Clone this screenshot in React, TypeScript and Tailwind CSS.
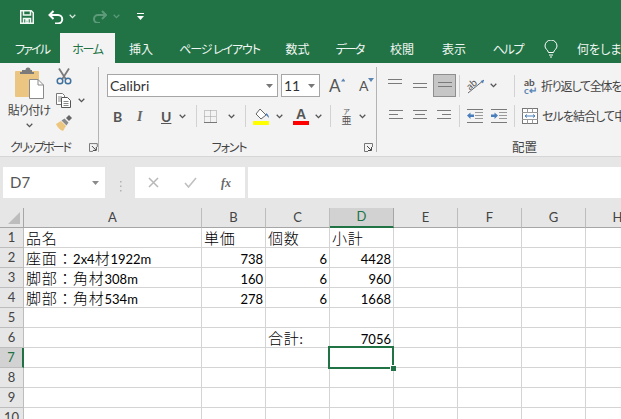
import React from "react";

const Chevron = ({ c = "#555", className = "" }: { c?: string; className?: string }) => (
  <svg width="7" height="5" viewBox="0 0 7 5" className={className}>
    <path d="M0.7 0.8 L3.5 3.6 L6.3 0.8" fill="none" stroke={c} strokeWidth="1.3" />
  </svg>
);
const Launcher = () => (
  <svg width="9" height="9" viewBox="0 0 9 9">
    <path d="M8.5 4V.5H.5v8H4" fill="none" stroke="#777" />
    <path d="M3 3l4 4M7.5 4v3.500H4" fill="none" stroke="#444" />
  </svg>
);
const Caret = ({ c = "#777" }: { c?: string }) => (
  <svg width="7" height="4" viewBox="0 0 7 4"><path d="M0 0h7L3.500 4z" fill={c} /></svg>
);
const Lines = ({ rows, w = 14 }: { rows: [number, number][]; w?: number }) => (
  <svg width={w} height="14" viewBox={`0 0 ${w} 14`}>
    {rows.map(([x, l], i) => (
      <rect key={i} x={x} y={1 + i * 4} width={l} height="1" fill="#7a7a7a" />
    ))}
  </svg>
);
const VLine = ({ ml, h = 22 }: { ml: string; h?: number }) => (
  <div className={`w-px bg-[#d2d2d2] ${ml}`} style={{ height: h }} />
);

const Paste = () => (
  <svg width="29" height="32" viewBox="0 0 29 32">
    <rect x="0" y="4" width="24" height="26" rx="1" fill="#ebc582" />
    <path d="M7 5V3h3.500a2.500 2.500 0 0 1 5 0H17v2h2v2H5V5z" fill="#7b7b7b" />
    <path d="M14.500 12.500H23l5.500 5.500v13.500h-14z" fill="#fff" stroke="#8a8a8a" />
    <path d="M23 12.500V18h5.500" fill="none" stroke="#8a8a8a" />
  </svg>
);
const Scissors = () => (
  <svg width="16" height="17" viewBox="0 0 16 17">
    <path d="M3 .5l7 11M13 .5l-7 11" stroke="#7a7a7a" strokeWidth="1.800" fill="none" />
    <circle cx="4" cy="13" r="2.800" fill="none" stroke="#41719c" strokeWidth="1.500" />
    <circle cx="12" cy="13" r="2.800" fill="none" stroke="#41719c" strokeWidth="1.500" />
  </svg>
);
const Copy = () => (
  <svg width="15" height="15" viewBox="0 0 15 15">
    <path d="M.5.500h6l2 2v9h-8z" fill="#fff" stroke="#777" />
    <path d="M5.500 4.500h6l3 3v7h-9z" fill="#fff" stroke="#555" />
    <path d="M2 4h4M2 6h3M2 8h3M7.500 8.500h5M7.500 10.500h5M7.500 12.500h5" stroke="#888" />
  </svg>
);
const Brush = () => (
  <svg width="17" height="16" viewBox="0 0 17 16">
    <path d="M0 9l5-3 5 5-3 5C4 15 1 12 0 9z" fill="#ecc57f" />
    <path d="M5.500 5.500l3-2 4 4-2 3z" fill="#8a8a8a" />
    <path d="M10 3l3-3 3 3-3 3z" fill="#666" />
  </svg>
);
const BigA = ({ arrow, size }: { arrow: "up" | "down"; size: string }) => (
  <div className="flex items-start w-[16px] h-[17px]">
    <span className={`text-[#555] leading-[17px] ${size}`}>A</span>
    <svg width="6" height="4" viewBox="0 0 6 4" className="mt-px">
      <path d={arrow === "up" ? "M0 4h6L3 0z" : "M0 0h6L3 4z"} fill="#5b85b5" />
    </svg>
  </div>
);
const Borders = () => (
  <svg width="13" height="13" viewBox="0 0 13 13">
    <path d="M.5.500h12v12H.500zM6.500.500v12M.500 6.500h12" stroke="#9a9a9a" strokeDasharray="1 1" fill="none" />
    <path d="M0 12.500h13" stroke="#777" />
  </svg>
);
const Fill = () => (
  <svg width="17" height="17" viewBox="0 0 17 17">
    <path d="M7 1l6 6-5 4-5-5z" fill="#fff" stroke="#666" />
    <path d="M13 5c2 1 3 3 3 5l-3-3z" fill="#4a7ebb" />
    <rect x="0" y="13" width="16" height="4" fill="#ffff00" />
  </svg>
);
const Orient = () => (
  <svg width="18" height="17" viewBox="0 0 18 17">
    <path d="M1 16L17 3" stroke="#666" strokeWidth="1" />
    <path d="M17 3l-1 3.500L13.500 4z" fill="#4a7ebb" />
    <text x="0" y="10" fontSize="10" fill="#555" transform="rotate(-40 6 8)" fontFamily="Lato">ab</text>
  </svg>
);
const Indent = ({ dir }: { dir: "l" | "r" }) => (
  <svg width="16" height="14" viewBox="0 0 16 14">
    <path d="M0 .500h16M0 13.500h16" stroke="#7a7a7a" />
    <path d="M8 3.500h8M8 6.500h8M8 9.500h8" stroke="#999" />
    {dir === "l" ? (
      <path d="M0 6.500L3.500 3.500v2H7v2.500H3.500v2z" fill="#4a7ebb" />
    ) : (
      <path d="M7 6.500L3.500 3.500v2H0v2.500h3.500v2z" fill="#4a7ebb" />
    )}
  </svg>
);
const Merge = () => (
  <svg width="16" height="16" viewBox="0 0 16 16">
    <rect x=".5" y=".5" width="15" height="15" fill="#fff" stroke="#777" />
    <path d="M0 4.500h16M0 11.500h16M5.500.500v4M10.500.500v4M5.500 11.500v4M10.500 11.500v4" stroke="#999" />
    <path d="M3 8h10M3 8l2-1.500M3 8l2 1.500M13 8l-2-1.500M13 8l-2 1.500" stroke="#4a7ebb" fill="none" />
  </svg>
);

const tabs: [string, number, string][] = [
  ["ファイル", 56, "tracking-[-1.8px]"],
  ["ホーム", 55, "tracking-[-1.3px]"],
  ["挿入", 52, ""],
  ["ページ レイアウト", 105, "tracking-[-1.1px]"],
  ["数式", 51, ""],
  ["データ", 53, "tracking-[-2px]"],
  ["校閲", 52, ""],
  ["表示", 52, ""],
  ["ヘルプ", 56, "tracking-[-1.3px]"],
];

const colWidths = "grid-cols-[24px_178px_64px_64px_64px_64px_64px_64px_64px]";
const rows: Record<number, [string, string, string, string]> = {
  1: ["品名", "単価", "個数", "小計"],
  2: ["座面：2x4材1922m", "738", "6", "4428"],
  3: ["脚部：角材308m", "160", "6", "960"],
  4: ["脚部：角材534m", "278", "6", "1668"],
  5: ["", "", "", ""],
  6: ["", "", "合計:", "7056"],
  7: ["", "", "", ""],
  8: ["", "", "", ""],
  9: ["", "", "", ""],
  10: ["", "", "", ""],
};

const Runs = ({ v }: { v: string }) => (
  <>
    {(v.match(/[\x00-\x7f]+|[^\x00-\x7f]+/g) ?? []).map((part, i) =>
      /^[\x00-\x7f]/.test(part) ? (
        <span key={i} className="text-[13px]">{part}</span>
      ) : (
        <span key={i} className="text-[15px] tracking-[0.7px] [font-family:'Noto_Sans_CJK_JP',sans-serif] font-light">{part}</span>
      )
    )}
  </>
);

const Cell = ({ v, right, sel }: { v: string; right?: boolean; sel?: boolean }) => (
  <div
    className={`relative h-[20px] border-r border-b border-[#d4d4d4] overflow-visible whitespace-nowrap leading-[19px] text-black [font-feature-settings:normal] ${
      right ? "text-right pr-[2px]" : "pl-[2px]"
    }`}
  >
    <Runs v={v} />
    {sel && (
      <div className="absolute left-[-2px] top-[-2px] w-[66px] h-[23px] border-2 border-[#217346] z-10">
        <div className="absolute right-[-4px] bottom-[-4px] w-[6px] h-[6px] bg-[#217346] border-t border-l border-white" />
      </div>
    )}
  </div>
);

export default function App() {
  return (
    <div className="w-[621px] h-[419px] overflow-hidden bg-white text-[#444] [font-family:'Noto_Sans_CJK_JP','Noto_Sans',sans-serif] [font-feature-settings:'palt']">
      {/* title bar */}
      <div className="h-[33px] bg-[#217346] flex items-center pl-[20px]">
        <svg width="14" height="14" viewBox="0 0 14 14">
          <path d="M.75.750h10.500L13.250 2.750v10.500H.750z" fill="none" stroke="#f1f7f3" strokeWidth="1.500" />
          <path d="M3.500 1v4h7V1" fill="none" stroke="#f1f7f3" strokeWidth="1.500" />
          <path d="M3.500 13V8.500h7V13M6 10h2v3H6z" fill="none" stroke="#f1f7f3" strokeWidth="1.500" />
        </svg>
        <svg width="16" height="14" viewBox="0 0 16 14" className="ml-[14px]">
          <path d="M5.500 1L1.500 5l4 4M1.500 5H10a4.200 4.200 0 0 1 0 8.500H7" fill="none" stroke="#fff" strokeWidth="2" />
        </svg>
        <Chevron c="#d8e8df" className="ml-[5px]" />
        <svg width="15" height="13" viewBox="0 0 15 13" className="ml-[16px]">
          <path d="M10 1l4 4-4 4M14 5H6a3.800 3.800 0 0 0 0 8h2" fill="none" stroke="#5c9a79" strokeWidth="2" />
        </svg>
        <Chevron c="#5c9a79" className="ml-[6px]" />
        <svg width="7" height="7" viewBox="0 0 7 7" className="ml-[17px]">
          <path d="M0 .500h7" stroke="#fff" />
          <path d="M0 3h7L3.500 7z" fill="#fff" />
        </svg>
      </div>

      {/* tabs */}
      <div className="h-[30px] bg-[#217346] flex pl-[4px] text-[12px] text-[#f1f7f3] whitespace-pre overflow-hidden">
        {tabs.map(([t, w, tr]) => (
          <div
            key={t}
            style={{ width: w }}
            className={`shrink-0 flex items-center justify-center pt-[1px] ${tr} ${t === "ホーム" ? "bg-[#f3f3f3] text-[#217346]" : ""}`}
          >
            {t}
          </div>
        ))}
        <svg width="14" height="18" viewBox="0 0 14 18" className="ml-[8px] mt-[7px] shrink-0">
          <path d="M4.500 12.500C4 10 1 9 1 6a6 6 0 0 1 12 0c0 3-3 4-3.500 6.500z" fill="none" stroke="#fff" />
          <path d="M5 15h4M6 17h2" stroke="#fff" />
        </svg>
        <div className="ml-[19px] shrink-0 flex items-center pt-[1px]">何をします</div>
      </div>

      {/* ribbon */}
      <div className="h-[94px] bg-[#f3f3f3] border-b border-[#d6d6d6] pt-[4px] flex text-[#444] whitespace-nowrap overflow-hidden">
        {/* clipboard */}
        <div className="w-[99px] h-[85px] border-r border-[#b4b4b4] shrink-0 flex flex-col">
          <div className="h-[72px] shrink-0 flex">
            <div className="w-[56px] flex flex-col items-center pl-[2px]">
              <Paste />
              <div className="text-[12px] leading-[14px] mt-[4px] tracking-[-0.8px]">貼り付け</div>
              <Chevron className="mt-[6px]" />
            </div>
            <div className="flex flex-col pt-[1px]">
              <Scissors />
              <div className="flex items-center mt-[8px]">
                <Copy />
                <Chevron className="ml-[7px]" />
              </div>
              <div className="mt-[7px]"><Brush /></div>
            </div>
          </div>
          <div className="h-[16px] shrink-0 flex items-center text-[12px] pl-[10px]">
            <span className="w-[81px] tracking-[-2px]">クリップボード</span>
            <Launcher />
          </div>
        </div>

        {/* font */}
        <div className="w-[278px] h-[85px] border-r border-[#b4b4b4] shrink-0 flex flex-col">
          <div className="h-[72px] shrink-0 pl-[8px] pt-[7px]">
            <div className="flex items-center h-[23px]">
              <div className="w-[171px] h-[23px] bg-white border border-[#a6a6a6] flex items-center pl-[2px] pr-[4px] justify-between text-[14px] [font-family:'Lato',sans-serif] text-[#333]">
                Calibri
                <Caret />
              </div>
              <div className="ml-[3px] w-[39px] h-[23px] bg-white border border-[#a6a6a6] flex items-center pl-[2px] pr-[4px] justify-between text-[14px] [font-family:'Lato',sans-serif] text-[#333]">
                11
                <Caret />
              </div>
              <div className="ml-[9px] [font-family:'Lato',sans-serif]"><BigA arrow="up" size="text-[17px]" /></div>
              <div className="ml-[14px] [font-family:'Lato',sans-serif]"><BigA arrow="down" size="text-[14px]" /></div>
            </div>
            <div className="flex items-center h-[22px] mt-[8px] [font-family:'Liberation_Sans',sans-serif] text-[13px] text-[#555]">
              <span className="ml-[6px] w-[12px] font-bold [font-family:'Lato',sans-serif] text-[14px]">B</span>
              <span className="ml-[12px] w-[12px] italic font-bold text-[#666] [font-family:'Liberation_Serif',serif] text-[14px]">I</span>
              <span className="ml-[12px] w-[12px] font-bold underline [font-family:'Lato',sans-serif] text-[14px]">U</span>
              <Chevron className="ml-[6px]" />
              <VLine ml="ml-[10px]" />
              <div className="ml-[7px]"><Borders /></div>
              <Chevron className="ml-[11px]" />
              <VLine ml="ml-[10px]" />
              <div className="ml-[7px]"><Fill /></div>
              <Chevron className="ml-[6px]" />
              <div className="ml-[10px] w-[16px] flex flex-col items-center">
                <span className="font-bold text-[14px] leading-[13px] text-[#555]">A</span>
                <div className="w-[16px] h-[4px] bg-[#ff0000]" />
              </div>
              <Chevron className="ml-[6px]" />
              <VLine ml="ml-[8px]" />
              <div className="ml-[10px] w-[11px] flex flex-col items-center text-[10px] leading-[9px] [font-family:'Noto_Sans_CJK_JP',sans-serif]">
                <span className="text-[7px] leading-[7px]">ア</span>
                <span>亜</span>
              </div>
              <Chevron className="ml-[7px]" />
            </div>
          </div>
          <div className="h-[16px] shrink-0 flex items-center text-[12px]">
            <span className="w-[265px] text-center tracking-[-1.2px] pr-[5px]">フォント</span>
            <Launcher />
          </div>
        </div>

        {/* alignment */}
        <div className="flex-1 min-w-0 h-[85px] flex flex-col">
          <div className="h-[72px] shrink-0 pl-[11px] pt-[7px]">
            <div className="flex items-center h-[23px] [&>*]:shrink-0">
              <div className="w-[15px] self-start mt-[4px]"><Lines rows={[[0, 14], [0, 14]]} /></div>
              <div className="w-[15px] ml-[10px] mt-[6px]"><Lines rows={[[0, 14], [0, 14]]} /></div>
              <div className="ml-[5px] w-[23px] h-[23px] bg-[#c6c6c6] border border-[#8f8f8f] flex justify-center items-end pb-[1px]">
                <Lines rows={[[0, 14], [0, 14]]} />
              </div>
              <VLine ml="ml-[3px]" />
              <div className="ml-[7px]"><Orient /></div>
              <Chevron className="ml-[5px]" />
              <VLine ml="ml-[17px]" />
              <div className="ml-[9px] w-[12px] leading-[8px] text-[10px] font-bold [font-family:'Lato',sans-serif] text-[#555]">
                ab<br /><span className="text-[#5b85b5]">c↵</span>
              </div>
              <span className="ml-[5px] text-[12px] tracking-[-1.2px]">折り返して全体を</span>
            </div>
            <div className="flex items-center h-[22px] mt-[8px] [&>*]:shrink-0">
              <div className="w-[14px] ml-[1px]"><Lines rows={[[0, 14], [0, 9], [0, 14]]} /></div>
              <div className="w-[14px] ml-[10px]"><Lines rows={[[0, 14], [2, 10], [0, 14]]} /></div>
              <div className="w-[14px] ml-[10px]"><Lines rows={[[0, 14], [5, 9], [0, 14]]} /></div>
              <VLine ml="ml-[8px]" />
              <div className="ml-[7px]"><Indent dir="l" /></div>
              <div className="ml-[8px]"><Indent dir="r" /></div>
              <VLine ml="ml-[7px]" />
              <div className="ml-[7px]"><Merge /></div>
              <span className="ml-[4px] text-[12px] tracking-[-0.9px]">セルを結合して中</span>
            </div>
          </div>
          <div className="h-[16px] shrink-0 flex items-center text-[12.500px] pl-[135px]">配置</div>
        </div>
      </div>

      {/* formula bar */}
      <div className="h-[51px] bg-[#e6e6e6] flex pt-[10px] pl-[3px] border-b border-[#e6e6e6]">
        <div className="w-[102px] h-[31px] bg-white flex items-center justify-between pl-[7px] pr-[6px] text-[15px] text-[#555] [font-family:'Lato',sans-serif]">
          D7
          <Caret c="#8a8a8a" />
        </div>
        <div className="w-[30px] flex items-center justify-center pb-[1px]">
          <svg width="3" height="11" viewBox="0 0 3 11"><path d="M1 0h1.500v1.500H1zM1 4.500h1.500V6H1zM1 9h1.500v1.500H1z" fill="#b2b2b2" /></svg>
        </div>
        <div className="w-[110px] h-[31px] bg-white flex items-center pl-[13px]">
          <svg width="11" height="11" viewBox="0 0 11 11"><path d="M1 1l9 9M10 1l-9 9" stroke="#b8b8b8" strokeWidth="1.500" /></svg>
          <svg width="13" height="11" viewBox="0 0 13 11" className="ml-[25px]"><path d="M1 6l3.500 4L12 1" fill="none" stroke="#c0c0c0" strokeWidth="1.600" /></svg>
          <span className="ml-[24px] text-[12px] italic font-bold text-[#666] [font-family:'Liberation_Serif',serif]">fx</span>
        </div>
        <div className="ml-[3px] flex-1 h-[31px] bg-white" />
      </div>

      {/* sheet */}
      <div className={`grid ${colWidths} [font-family:'Lato','Noto_Sans_CJK_JP',sans-serif]`}>
        <div className="h-[20px] bg-[#e6e6e6] border-r border-b border-[#a6a6a6] flex items-end justify-end pr-[3px] pb-[3px]">
          <svg width="12" height="12" viewBox="0 0 12 12"><path d="M12 0v12H0z" fill="#bdbdbd" /></svg>
        </div>
        {["A", "B", "C", "D", "E", "F", "G", "H"].map((c) => (
          <div
            key={c}
            className={`h-[20px] flex items-center justify-center text-[13px] border-r ${
              c === "D"
                ? "bg-[#d2d2d2] text-[#217346] border-b-2 border-b-[#217346] border-r-[#a6a6a6]"
                : "bg-[#e6e6e6] text-[#444] border-b border-b-[#a6a6a6] border-r-[#bdbdbd]"
            }`}
          >
            {c}
          </div>
        ))}
        {Object.entries(rows).map(([n, [a, b, c, d]]) => {
          const num = Number(n);
          return (
            <React.Fragment key={n}>
              <div
                className={`h-[20px] border-r border-b border-[#bdbdbd] flex items-center justify-center text-[13px] ${
                  num === 7 ? "bg-[#d2d2d2] text-[#217346] border-r-2 border-r-[#217346]" : "bg-[#e6e6e6] text-[#444]"
                }`}
              >
                {n}
              </div>
              <Cell v={a} />
              <Cell v={b} right={num > 1} />
              <Cell v={c} right={num > 1 && num < 6} />
              <Cell v={d} right={num > 1} sel={num === 7} />
              <Cell v="" />
              <Cell v="" />
              <Cell v="" />
              <Cell v="" />
            </React.Fragment>
          );
        })}
      </div>
    </div>
  );
}
